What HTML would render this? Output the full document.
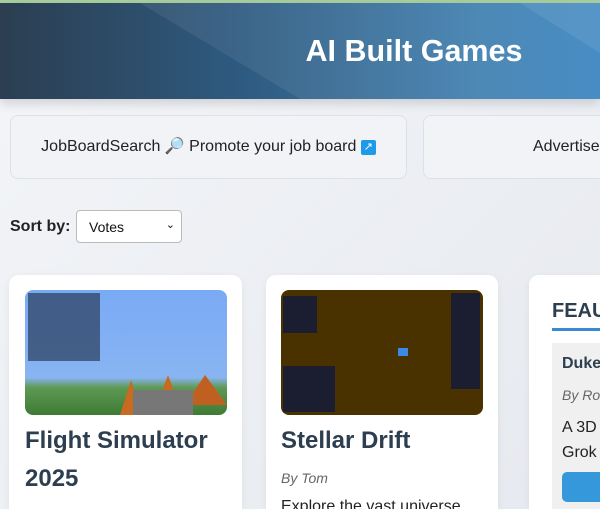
<!DOCTYPE html>
<html style="width:600px;height:509px;overflow:hidden"><head><meta charset="utf-8"><style>
*{box-sizing:border-box;margin:0;padding:0}
html,body{width:600px;height:509px;overflow:hidden}
body{background:linear-gradient(135deg,#f3f5f8,#e6e9ef);font-family:"Liberation Sans",Arial,sans-serif;position:relative;color:#2c3e50}
.top{position:absolute;left:0;top:0;width:600px;height:3px;background:#a9cf9f}
header{position:absolute;left:0;top:3px;width:600px;height:96px;background:linear-gradient(90deg,#2c3e50 0%,#2e5a80 40%,#4080b0 80%,#3a85c0 100%);overflow:hidden;box-shadow:0 4px 10px rgba(0,0,0,.15)}
header h1{position:absolute;left:0;width:828px;text-align:center;top:31px;font-size:30.5px;color:#fff;font-weight:bold}
.ad{position:absolute;top:115px;height:64px;border:1px solid #dde1e7;border-radius:8px;background:#f1f3f6;font-size:16px;color:#222;line-height:62px}
.sort{position:absolute;left:10px;top:218px;font-size:16px;font-weight:bold;color:#222}
.sel{position:absolute;left:76px;top:210px;width:106px;height:33px;background:#fff;border:1px solid #bbb;border-radius:4px;font-size:14px;color:#111;padding:8px 12px}
.card{position:absolute;top:275px;background:#fff;border-radius:10px 10px 0 0;height:234px;overflow:hidden;box-shadow:0 2px 8px rgba(0,0,0,.06)}
.img{position:absolute;top:15px;height:125px;border-radius:8px;overflow:hidden}
.t{position:absolute;font-size:24px;font-weight:bold;color:#2c3e50;line-height:38px}
</style></head><body>
<div class="top"></div>
<header>
<svg width="600" height="96" style="position:absolute;left:0;top:0"><polygon points="140,0 600,0 600,96 300,96" fill="rgba(255,255,255,0.07)"/><polygon points="520,0 600,0 600,50" fill="rgba(255,255,255,0.08)"/></svg>
<h1>AI Built Games</h1></header>
<div class="ad" style="left:10px;width:397px;text-align:center">JobBoardSearch <span style="color:#5a4fb0">🔎</span> Promote your job board <span style="display:inline-block;width:15px;height:15px;background:#1e9be8;border-radius:2px;color:#fff;font-size:11px;line-height:15px;vertical-align:1px;text-align:center">↗</span></div>
<div class="ad" style="left:423px;width:177px;border-right:none;border-radius:8px 0 0 8px;padding-left:109px;overflow:hidden;white-space:nowrap">Advertise</div>
<div class="sort">Sort by:</div>
<div class="sel">Votes<span style="position:absolute;right:6px;top:7px;font-size:11px">⌄</span></div>
<div class="card" style="left:9px;width:233px">
<div class="img" style="left:16px;width:202px;background:linear-gradient(180deg,#7aaaf5 0%,#88b4f2 70%,#5f9a55 78%,#3f7a35 100%)">
<div style="position:absolute;left:3px;top:3px;width:72px;height:68px;background:rgba(40,60,90,.7)"></div>
<svg width="202" height="125" style="position:absolute;left:0;top:0"><polygon points="95,125 106,90 117,125" fill="#c86a20"/><polygon points="128,125 143,85 158,125" fill="#c86a20"/><polygon points="160,115 180,85 202,115" fill="#c06020"/><rect x="108" y="100" width="60" height="25" fill="#777"/></svg></div>
<div class="t" style="left:16px;top:147px">Flight Simulator<br>2025</div></div>
<div class="card" style="left:266px;width:232px">
<div class="img" style="left:15px;width:202px;background:#4a3200">
<div style="position:absolute;left:2px;top:6px;width:34px;height:37px;background:#1a1e30"></div>
<div style="position:absolute;left:2px;top:76px;width:52px;height:46px;background:#1a1e30"></div>
<div style="position:absolute;right:3px;top:3px;width:29px;height:96px;background:#1a1e30"></div>
<div style="position:absolute;left:117px;top:58px;width:10px;height:8px;background:#3a8ae8"></div></div>
<div class="t" style="left:15px;top:147px">Stellar Drift</div>
<div style="position:absolute;left:15px;top:195px;font-style:italic;color:#666;font-size:14px">By Tom</div>
<div style="position:absolute;left:15px;top:223px;font-size:16px;color:#222;white-space:nowrap">Explore the vast universe</div></div>
<div class="card" style="left:529px;width:71px;border-radius:10px 0 0 0">
<div style="position:absolute;left:23px;top:25px;font-size:20px;font-weight:bold;color:#2c3e50;white-space:nowrap">FEAUTURED</div>
<div style="position:absolute;left:23px;top:53px;width:60px;height:3px;background:#3a8ad0"></div>
<div style="position:absolute;left:23px;top:68px;width:60px;height:170px;background:#f0f0f0;white-space:nowrap">
<div style="position:absolute;left:10px;top:12px;font-size:16px;font-weight:bold">Duke</div>
<div style="position:absolute;left:10px;top:44px;font-size:14px;font-style:italic;color:#666">By Ro</div>
<div style="position:absolute;left:10px;top:72px;font-size:16px;color:#222;line-height:25px">A 3D<br>Grok</div>
<div style="position:absolute;left:10px;top:129px;width:80px;height:30px;background:#3498db;border-radius:5px"></div></div></div>
</body></html>
